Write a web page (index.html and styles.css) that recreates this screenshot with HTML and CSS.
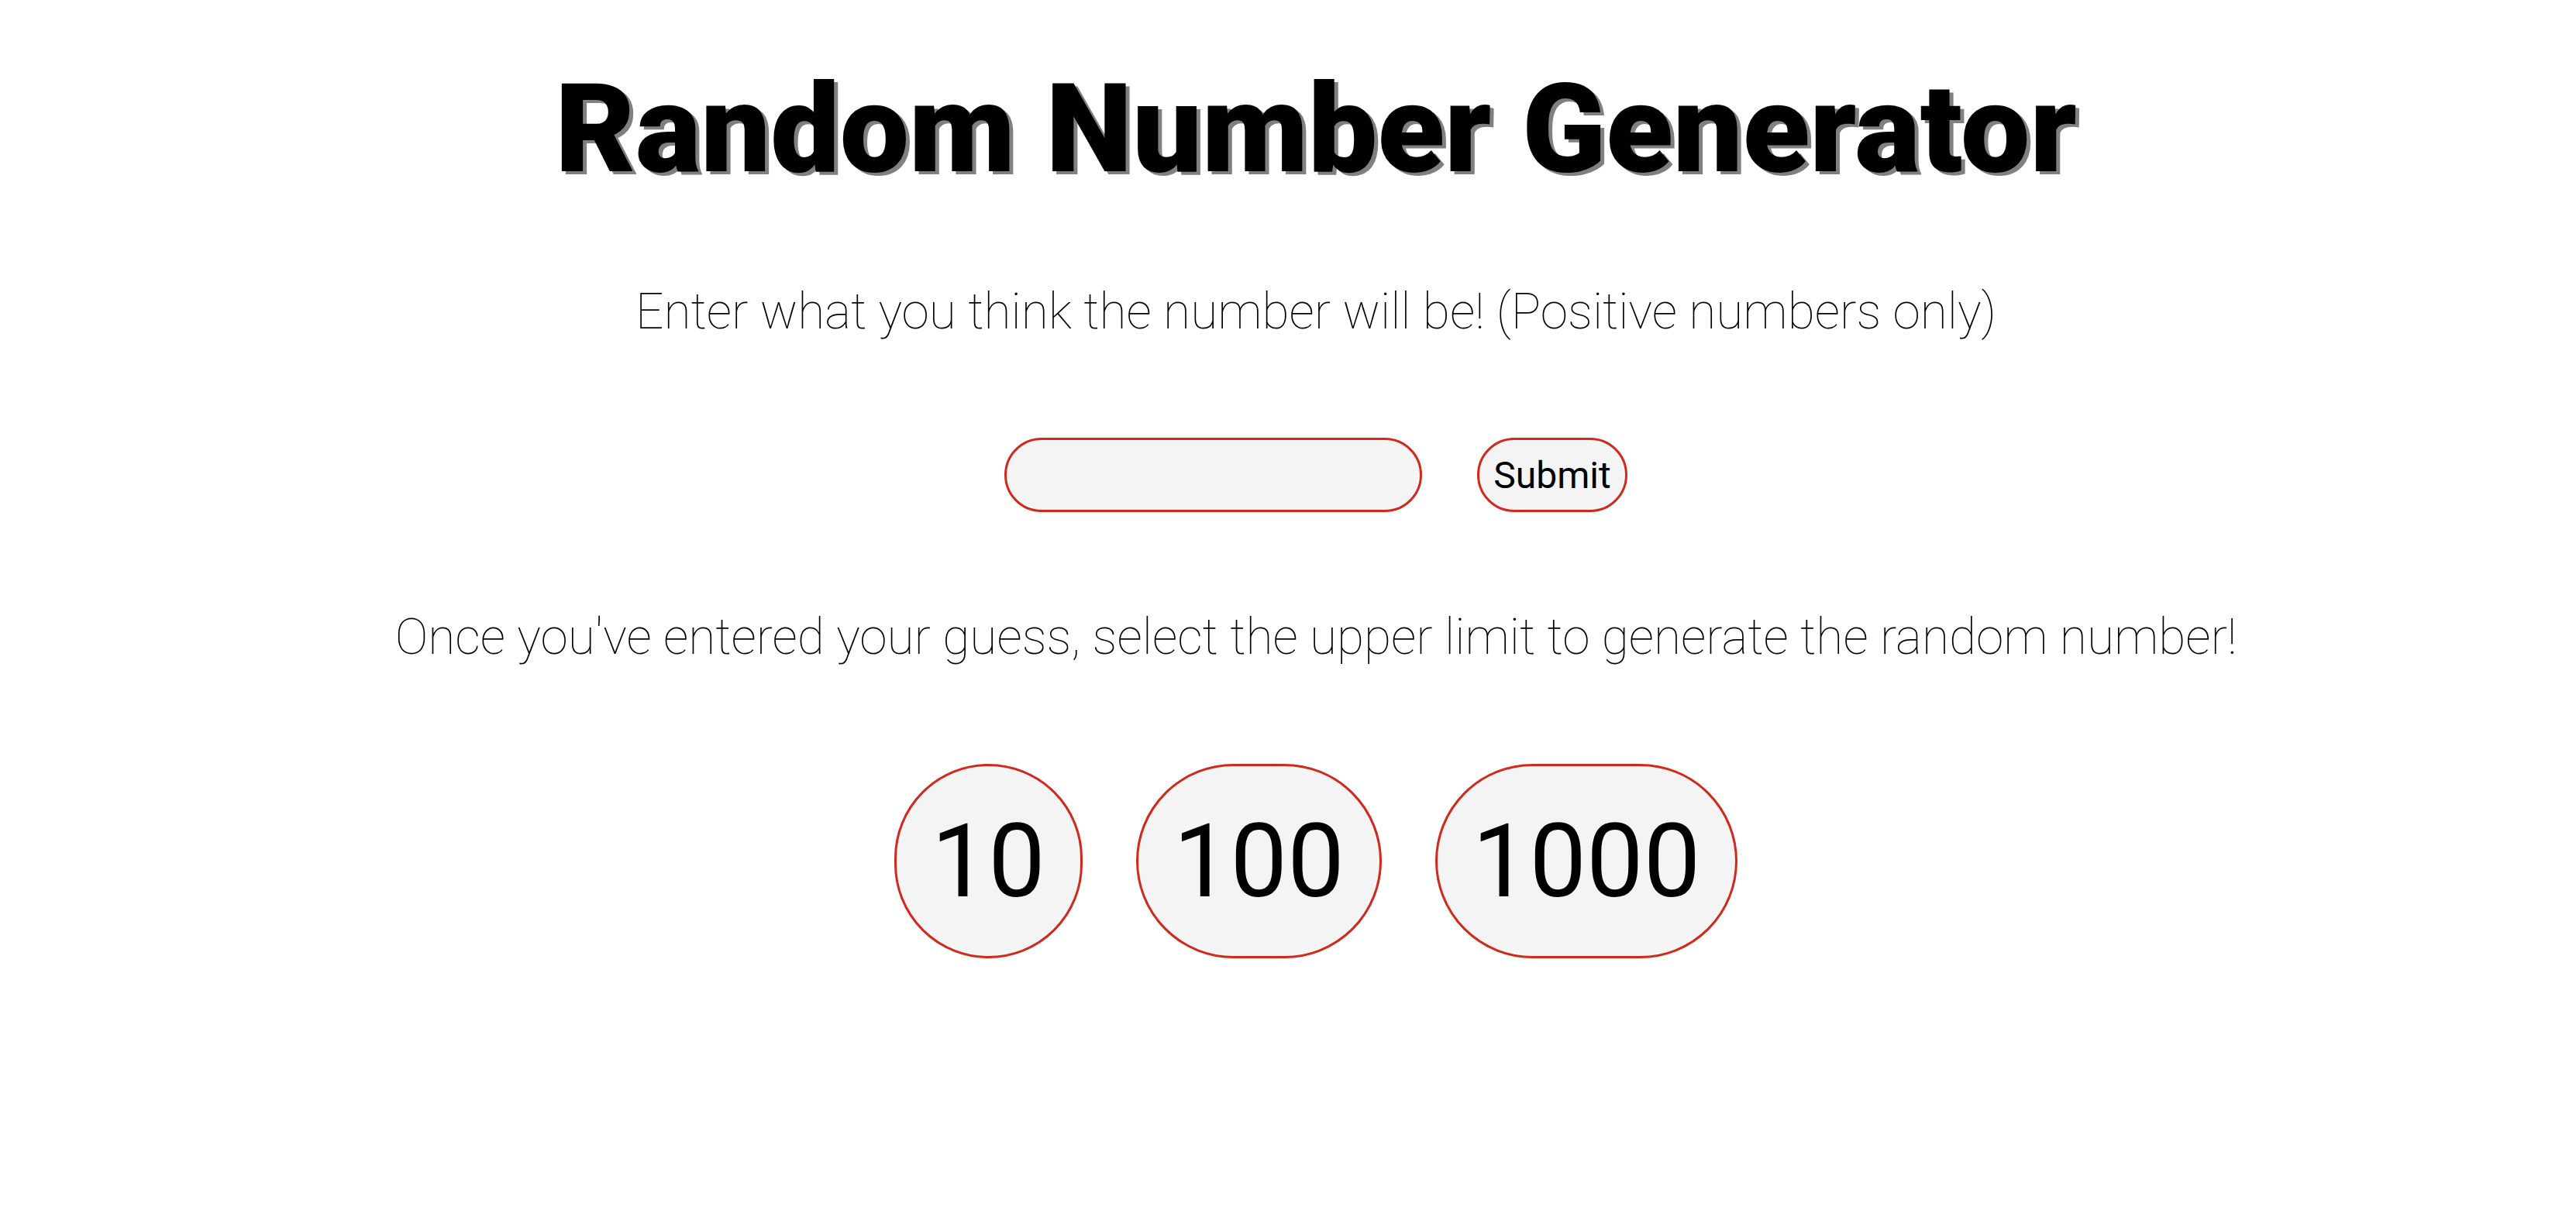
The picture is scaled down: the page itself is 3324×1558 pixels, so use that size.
FILE: index.html
```html
<!DOCTYPE html>
<html lang="en">
<head>
<meta charset="utf-8">
<title>Random Number Generator</title>
<link rel="stylesheet" href="styles.css">
</head>
<body>
<main class="page">
  <h1 class="title">Random Number Generator</h1>
  <p class="prompt prompt-first">Enter what you think the number will be! (Positive numbers only)</p>
  <form class="guess-row" onsubmit="return false;">
    <input class="guess-input" type="text" aria-label="Your guess">
    <button class="submit-btn" type="submit">Submit</button>
  </form>
  <p class="prompt prompt-second">Once you've entered your guess, select the upper limit to generate the random number!</p>
  <div class="limits">
    <button class="limit-btn" type="button">10</button>
    <button class="limit-btn" type="button">100</button>
    <button class="limit-btn" type="button">1000</button>
  </div>
</main>
</body>
</html>
```

FILE: styles.css
```css
html, body {
  margin: 0;
  background: #ffffff;
}

body {
  font-family: Roboto, "Liberation Sans", Arial, sans-serif;
  color: #000000;
  padding-left: 72px;
}

.page {
  display: flex;
  flex-direction: column;
  align-items: center;
  padding-top: 73px;
}

.title {
  margin: 0;
  font-size: 159px;
  font-weight: 900;
  line-height: normal;
  text-shadow: 5px 4px 0 #808080;
  white-space: nowrap;
}

.prompt {
  margin: 0;
  font-size: 64px;
  font-weight: 100;
  line-height: normal;
  white-space: nowrap;
  color: #000000;
}

.prompt-first {
  margin-top: 105px;
}

.guess-row {
  display: flex;
  align-items: center;
  gap: 71px;
  margin: 125px 0 0;
}

.guess-input {
  box-sizing: border-box;
  width: 539px;
  height: 96px;
  border: 3px solid #cf2a1c;
  border-radius: 9999px;
  background: #f4f4f4;
  font-family: inherit;
  font-size: 48px;
  padding: 0 30px;
  outline: none;
}

.submit-btn {
  box-sizing: border-box;
  height: 96px;
  padding: 0 18px;
  border: 3px solid #cf2a1c;
  border-radius: 9999px;
  background: #f4f4f4;
  font-family: inherit;
  font-size: 48px;
  font-weight: 400;
  color: #000000;
}

.prompt-second {
  margin-top: 124px;
}

.limits {
  display: flex;
  align-items: center;
  gap: 69px;
  margin-top: 126px;
}

.limit-btn {
  box-sizing: border-box;
  height: 251px;
  padding: 0 45px;
  border: 3px solid #cf2a1c;
  border-radius: 9999px;
  background: #f4f4f4;
  font-family: inherit;
  font-size: 131px;
  font-weight: 400;
  line-height: normal;
  color: #000000;
}
```
